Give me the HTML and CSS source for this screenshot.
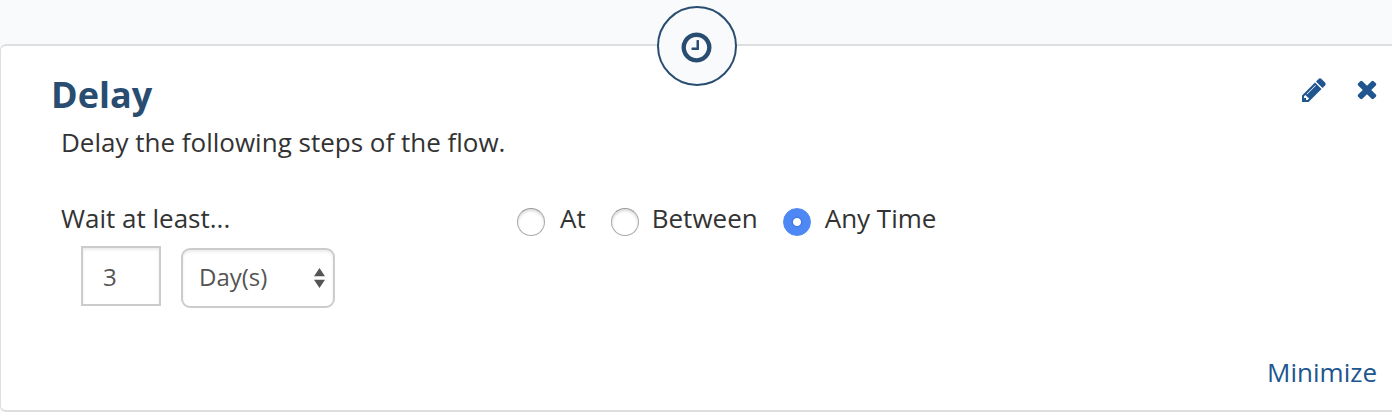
FILE: index.html
```html
<!DOCTYPE html>
<html lang="en">

<head>
    <meta charset="UTF-8">
    <meta name="viewport" content="width=device-width, initial-scale=1.0">
    <title>Delay</title>
    <link rel="stylesheet" href="styles.css">
</head>

<body>

    <div class="step-card">
        <div class="step-icon">
            <svg viewBox="0 0 1792 1792"><path d="M1024 544v448q0 14-9 23t-23 9h-320q-14 0-23-9t-9-23v-64q0-14 9-23t23-9h224v-352q0-14 9-23t23-9h64q14 0 23 9t9 23zm416 352q0-148-73-273t-198-198-273-73-273 73-198 198-73 273 73 273 198 198 273 73 273-73 198-198 73-273zm224 0q0 209-103 385.5t-279.5 279.5-385.5 103-385.5-103-279.5-279.5-103-385.5 103-385.5 279.5-279.5 385.5-103 385.5 103 279.5 279.5 103 385.5z"/></svg>
        </div>

        <div class="step-header">
            <h1>Delay</h1>
            <div class="step-actions">
                <a class="edit" href="#" aria-label="Edit">
                    <svg viewBox="0 0 1792 1792"><path d="M491 1536l91-91-235-235-91 91v107h128v128h107zm523-928q0-22-22-22-10 0-17 7l-542 542q-7 7-7 17 0 22 22 22 10 0 17-7l542-542q7-7 7-17zm-54-192l416 416-832 832h-416v-416zm683 96q0 53-37 90l-166 166-416-416 166-165q36-38 90-38 53 0 91 38l235 234q37 39 37 91z"/></svg>
                </a>
                <a class="remove" href="#" aria-label="Remove">
                    <svg viewBox="0 0 1792 1792"><path d="M1490 1322q0 40-28 68l-136 136q-28 28-68 28t-68-28l-294-294-294 294q-28 28-68 28t-68-28l-136-136q-28-28-28-68t28-68l294-294-294-294q-28-28-28-68t28-68l136-136q28-28 68-28t68 28l294 294 294-294q28-28 68-28t68 28l136 136q28 28 28 68t-28 68l-294 294 294 294q28 28 28 68z"/></svg>
                </a>
            </div>
        </div>
        <p class="description">Delay the following steps of the flow.</p>

        <form class="delay-form">
            <div class="wait">
                <label for="amount">Wait at least...</label>
                <div class="wait-fields">
                    <input type="text" id="amount" value="3">
                    <div class="select-wrap">
                        <select id="unit">
                            <option>Day(s)</option>
                        </select>
                        <svg class="arrows" viewBox="0 0 12 22"><path d="M6 0l6 9H0zM6 22l6-9H0z"/></svg>
                    </div>
                </div>
            </div>
            <div class="time-options">
                <label class="at"><input type="radio" name="time">At</label>
                <label class="between"><input type="radio" name="time">Between</label>
                <label><input type="radio" name="time" checked>Any Time</label>
            </div>
        </form>

        <div class="step-footer">
            <a href="#">Minimize</a>
        </div>
    </div>

</body>

</html>
```

FILE: styles.css
```css
* {
    box-sizing: border-box;
}

body {
    margin: 0;
    padding-top: 44px;
    background-color: #f9fafc;
    font-family: "Open Sans", sans-serif;
    font-size: 26px;
    line-height: 36px;
    color: #333;
    overflow: hidden;
}

svg {
    display: block;
    fill: currentColor;
}

a {
    color: #20558f;
    text-decoration: none;
}

.step-card {
    position: relative;
    display: flex;
    flex-direction: column;
    width: 1400px;
    height: 368px;
    padding: 24px 21px 20px 50px;
    background-color: white;
    border: 2px solid #dcdee0;
    border-left-width: 1px;
    border-radius: 6px;
}

.step-icon {
    position: absolute;
    top: -40px;
    left: 656px;
    display: flex;
    align-items: center;
    justify-content: center;
    width: 80px;
    height: 80px;
    padding: 2px 1px 0 0;
    color: #284d70;
    background-color: #f9fafc;
    border: 2px solid #284d70;
    border-radius: 50%;
}

.step-icon svg {
    width: 35px;
    height: 35px;
}

.step-header {
    display: flex;
    justify-content: space-between;
    height: 54px;
}

h1 {
    margin: 0;
    font-size: 36px;
    line-height: 50px;
    color: #284d70;
}

.step-actions {
    display: flex;
    gap: 25px;
    margin-right: -4px;
    padding-top: 5px;
}

.step-actions svg {
    width: 28px;
    height: 28px;
}

.edit {
    padding-top: 1px;
}

.description {
    margin: 0 0 0 10px;
}

.delay-form {
    display: flex;
    margin: 40px 0 0 10px;
}

.wait {
    width: 456px;
}

.wait-fields {
    display: flex;
    gap: 20px;
    padding: 10px 0 0 20px;
}

.wait-fields input,
.wait-fields select {
    appearance: none;
    margin: 0;
    font-family: inherit;
    font-size: 24px;
    color: #555;
    background-color: white;
    border: 2px solid #ccc;
    box-shadow: inset 0 2px 3px rgba(0, 0, 0, 0.08);
}

.wait-fields input {
    width: 80px;
    height: 60px;
    padding: 0 20px;
    border-radius: 0;
}

.select-wrap {
    position: relative;
    margin-top: 2px;
}

.wait-fields select {
    display: block;
    width: 154px;
    height: 60px;
    padding: 0 16px 4px;
    border-radius: 9px;
}

.arrows {
    position: absolute;
    top: 19px;
    right: 10px;
    width: 11px;
    height: 22px;
    color: #555;
    pointer-events: none;
}

.time-options {
    display: flex;
    gap: 25px;
}

.time-options label {
    display: flex;
    gap: 14px;
    height: 36px;
}

.time-options .at {
    gap: 15px;
}

.time-options .between {
    gap: 13px;
}

.time-options input {
    appearance: none;
    width: 28px;
    height: 28px;
    margin: 8px 0 0;
    background-color: white;
    border: 1px solid #aaa;
    border-top-color: #999;
    border-radius: 50%;
    box-shadow: inset 0 2px 3px rgba(0, 0, 0, 0.15);
}

.time-options input:checked {
    background: radial-gradient(circle, white 3.5px, #3f78e0 4.5px, #4d88f5 6px);
    border-color: #4d88f5;
    box-shadow: none;
}

.step-footer {
    margin-top: auto;
    text-align: right;
}
```
